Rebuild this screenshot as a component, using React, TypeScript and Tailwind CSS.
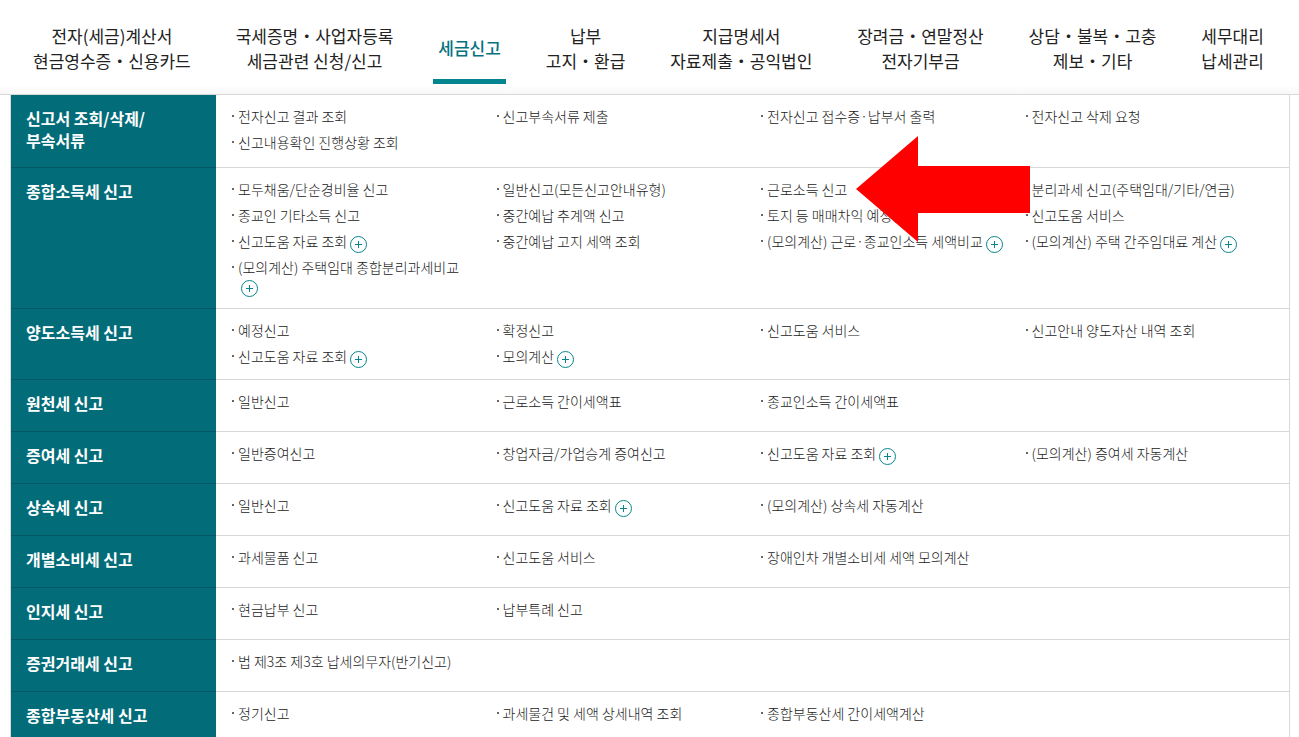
import clsx from 'clsx'

const TABS = [
  { lines: ['전자(세금)계산서', '현금영수증・신용카드'] },
  { lines: ['국세증명・사업자등록', '세금관련 신청/신고'] },
  { lines: ['세금신고'], active: true },
  { lines: ['납부', '고지・환급'] },
  { lines: ['지급명세서', '자료제출・공익법인'] },
  { lines: ['장려금・연말정산', '전자기부금'] },
  { lines: ['상담・불복・고충', '제보・기타'] },
  { lines: ['세무대리', '납세관리'] },
]

interface MenuItem {
  label: string
  more?: boolean
  pointed?: boolean
}

interface MenuSection {
  title: string[]
  columns: MenuItem[][]
}

const SECTIONS: MenuSection[] = [
  {
    title: ['신고서 조회/삭제/', '부속서류'],
    columns: [
      [{ label: '전자신고 결과 조회' }, { label: '신고내용확인 진행상황 조회' }],
      [{ label: '신고부속서류 제출' }],
      [{ label: '전자신고 접수증·납부서 출력' }],
      [{ label: '전자신고 삭제 요청' }],
    ],
  },
  {
    title: ['종합소득세 신고'],
    columns: [
      [
        { label: '모두채움/단순경비율 신고' },
        { label: '종교인 기타소득 신고' },
        { label: '신고도움 자료 조회', more: true },
        { label: '(모의계산) 주택임대 종합분리과세비교', more: true },
      ],
      [
        { label: '일반신고(모든신고안내유형)' },
        { label: '중간예납 추계액 신고' },
        { label: '중간예납 고지 세액 조회' },
      ],
      [
        { label: '근로소득 신고', pointed: true },
        { label: '토지 등 매매차익 예정신고' },
        { label: '(모의계산) 근로·종교인소득 세액비교', more: true },
      ],
      [
        { label: '분리과세 신고(주택임대/기타/연금)' },
        { label: '신고도움 서비스' },
        { label: '(모의계산) 주택 간주임대료 계산', more: true },
      ],
    ],
  },
  {
    title: ['양도소득세 신고'],
    columns: [
      [{ label: '예정신고' }, { label: '신고도움 자료 조회', more: true }],
      [{ label: '확정신고' }, { label: '모의계산', more: true }],
      [{ label: '신고도움 서비스' }],
      [{ label: '신고안내 양도자산 내역 조회' }],
    ],
  },
  {
    title: ['원천세 신고'],
    columns: [
      [{ label: '일반신고' }],
      [{ label: '근로소득 간이세액표' }],
      [{ label: '종교인소득 간이세액표' }],
    ],
  },
  {
    title: ['증여세 신고'],
    columns: [
      [{ label: '일반증여신고' }],
      [{ label: '창업자금/가업승계 증여신고' }],
      [{ label: '신고도움 자료 조회', more: true }],
      [{ label: '(모의계산) 증여세 자동계산' }],
    ],
  },
  {
    title: ['상속세 신고'],
    columns: [
      [{ label: '일반신고' }],
      [{ label: '신고도움 자료 조회', more: true }],
      [{ label: '(모의계산) 상속세 자동계산' }],
    ],
  },
  {
    title: ['개별소비세 신고'],
    columns: [
      [{ label: '과세물품 신고' }],
      [{ label: '신고도움 서비스' }],
      [{ label: '장애인차 개별소비세 세액 모의계산' }],
    ],
  },
  {
    title: ['인지세 신고'],
    columns: [[{ label: '현금납부 신고' }], [{ label: '납부특례 신고' }]],
  },
  {
    title: ['증권거래세 신고'],
    columns: [[{ label: '법 제3조 제3호 납세의무자(반기신고)' }]],
  },
  {
    title: ['종합부동산세 신고'],
    columns: [
      [{ label: '정기신고' }],
      [{ label: '과세물건 및 세액 상세내역 조회' }],
      [{ label: '종합부동산세 간이세액계산' }],
    ],
  },
]

export default function App() {
  return (
    <div className="h-screen overflow-hidden bg-white font-['Noto_Sans_CJK_KR',sans-serif] text-[#222]">
      {/* 상단 메뉴 */}
      <nav className="flex justify-between border-b border-[#d8d8d8] bg-linear-to-b from-white from-90% to-[#f8f8f8] pt-4 pr-[30px] pb-2.5 pl-7">
        {TABS.map((tab) => (
          <a
            key={tab.lines[0]}
            href="#"
            className={clsx(
              'flex h-[68px] flex-col items-center justify-center border-b-5 px-[5px] text-[17px] leading-[25px] whitespace-nowrap',
              tab.active ? 'border-[#04858f] font-medium text-[#04727f]' : 'border-transparent',
            )}
          >
            {tab.lines.map((line) => (
              <span key={line}>{line}</span>
            ))}
          </a>
        ))}
      </nav>

      {/* 세금신고 하위 메뉴 */}
      <main className="mr-[9px] ml-2.5 border-x border-[#d8d8d8]">
        {SECTIONS.map((section) => (
          <Section key={section.title[0]} {...section} />
        ))}
      </main>
    </div>
  )
}

function Section({ title, columns }: MenuSection) {
  return (
    <section className="flex min-h-[52px]">
      <h2 className="w-[205px] shrink-0 border-b border-[#035965] bg-[#036c79] px-[15px] pt-3 pb-4 text-base leading-[22px] font-bold text-white">
        {title.map((line) => (
          <span key={line} className="block">
            {line}
          </span>
        ))}
      </h2>
      <div className="grid flex-1 grid-cols-4 border-b border-[#d8d8d8] pt-2 pb-2.5 pl-[15px]">
        {columns.map((items) => (
          <ul key={items[0].label}>
            {items.map((item) => (
              <Item key={item.label} {...item} />
            ))}
          </ul>
        ))}
      </div>
    </section>
  )
}

function Item({ label, more, pointed }: MenuItem) {
  return (
    <li className="relative flex gap-1 py-1 pr-[18px] pl-px text-sm leading-[18px]">
      <span className="mt-2 h-0.5 w-0.5 shrink-0 bg-[#666]" />
      <span>
        <a href="#" className="font-light">
          {label}
        </a>
        {more && (
          <button type="button" aria-label="더보기" className="ml-[3px] inline-block h-[17px] align-top">
            <IconPlus />
          </button>
        )}
      </span>
      {pointed && <Arrow />}
    </li>
  )
}

function IconPlus() {
  return (
    <svg width="17" height="17" viewBox="0 0 17 17" fill="none" stroke="#07858c" className="mt-1">
      <circle cx="8.5" cy="8.5" r="8" />
      <path d="M8.5 5v7M5 8.5h7" />
    </svg>
  )
}

function Arrow() {
  return (
    <svg
      width="174"
      height="106"
      viewBox="0 0 174 106"
      className="pointer-events-none absolute top-1/2 left-24 z-10 -translate-y-1/2"
    >
      <path d="M0 53 62 0v30h112v47H62v29z" fill="#f00" />
    </svg>
  )
}
